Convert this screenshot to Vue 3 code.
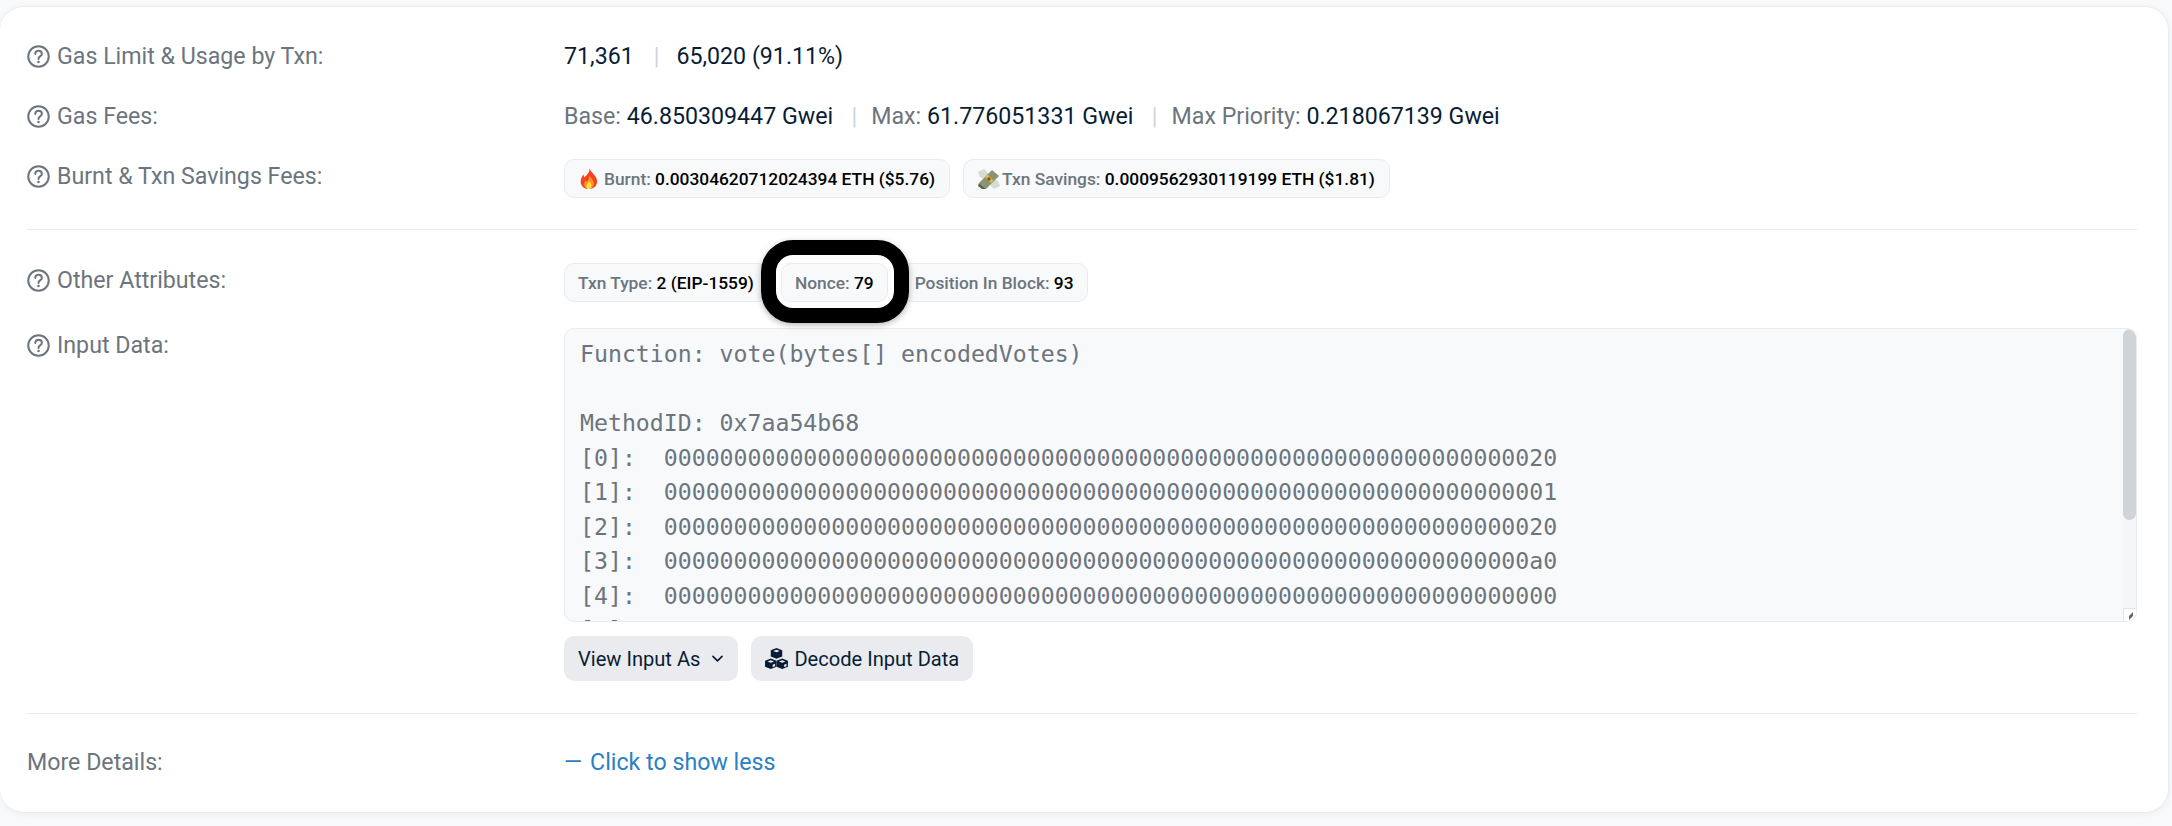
<script setup>
const labels = {
  gas: 'Gas Limit & Usage by Txn:',
  fees: 'Gas Fees:',
  burnt: 'Burnt & Txn Savings Fees:',
  other: 'Other Attributes:',
  input: 'Input Data:'
}
const zeros = (end) => end.padStart(64, '0')
const lines = [
  'Function: vote(bytes[] encodedVotes)',
  '',
  'MethodID: 0x7aa54b68',
  '[0]:  ' + zeros('20'),
  '[1]:  ' + zeros('1'),
  '[2]:  ' + zeros('20'),
  '[3]:  ' + zeros('a0'),
  '[4]:  ' + zeros('0'),
  '[5]:  ' + zeros('0')
]
</script>

<template>
  <div class="page">
    <div class="card">
      <section class="row r1">
        <div class="label"><svg class="help" viewBox="0 0 24 24"><circle cx="12" cy="12" r="10.7"/><path d="M8.6 9.3c.2-2 1.6-3.2 3.5-3.2 2 0 3.4 1.2 3.4 3 0 1.4-.8 2.1-1.9 2.8-1.1.7-1.6 1.3-1.6 2.6"/><circle class="dot" cx="12" cy="17.7" r="1.3"/></svg>{{ labels.gas }}</div>
        <div class="value">71,361<span class="sep first">|</span>65,020 (91.11%)</div>
      </section>
      <section class="row r2">
        <div class="label"><svg class="help" viewBox="0 0 24 24"><circle cx="12" cy="12" r="10.7"/><path d="M8.6 9.3c.2-2 1.6-3.2 3.5-3.2 2 0 3.4 1.2 3.4 3 0 1.4-.8 2.1-1.9 2.8-1.1.7-1.6 1.3-1.6 2.6"/><circle class="dot" cx="12" cy="17.7" r="1.3"/></svg>{{ labels.fees }}</div>
        <div class="value"><span class="muted">Base: </span>46.850309447 Gwei<span class="sep">|</span><span class="muted">Max: </span>61.776051331 Gwei<span class="sep">|</span><span class="muted">Max Priority: </span>0.218067139 Gwei</div>
      </section>
      <section class="row r3">
        <div class="label"><svg class="help" viewBox="0 0 24 24"><circle cx="12" cy="12" r="10.7"/><path d="M8.6 9.3c.2-2 1.6-3.2 3.5-3.2 2 0 3.4 1.2 3.4 3 0 1.4-.8 2.1-1.9 2.8-1.1.7-1.6 1.3-1.6 2.6"/><circle class="dot" cx="12" cy="17.7" r="1.3"/></svg>{{ labels.burnt }}</div>
        <div class="badges">
          <div class="badge fire-badge"><svg class="fire" viewBox="0 0 18 22"><path fill="#f4431f" d="M9.500 0c.6 3.500 4.500 5.800 6.800 9.800 2.700 4.900.6 12.200-7.300 12.200C2 22-.8 16.500.6 11.700c.6-2 1.700-3.200 2.300-5 .8.900 1.200 2 1.300 3.200C6.700 7.700 10 4.500 9.500 0z"/><path fill="#ff9a1f" d="M9.600 7.500c.5 2.500 4 4.200 4.400 8 .3 3.300-1.900 6.500-5 6.500s-5.200-2.500-5-5.500c.1-1.500.8-2.700 1.500-3.700.3.800.7 1.400 1.300 1.800C8 12.500 9.800 10.500 9.600 7.500z"/><path fill="#ffe14d" d="M9.200 14c.4 1.600 2.400 2.600 2.400 4.500 0 2-1.200 3.500-2.700 3.500s-2.600-1.400-2.600-3c0-2.300 2.500-2.800 2.900-5z"/></svg><span class="muted">Burnt: </span><span>0.00304620712024394 ETH ($5.76)</span></div>
          <div class="badge"><svg class="emoji" viewBox="0 0 22 20"><path fill="#d5dcd6" d="M0 3l6-3 5 5-5 5-4-2zM22 17l-6 3-5-5 5-5 4 2z"/><path fill="#8a9472" d="M1 14L14 1l7 6L8 20z"/><path fill="#58624a" d="M1 14l7 6H4l-4-3z"/><path fill="#e5b93c" d="M7 8l2.500-2.500 6 6L13 14z"/><circle cx="11" cy="10" r="1.800" fill="#6f6128"/></svg><span class="muted">Txn Savings: </span><span>0.0009562930119199 ETH ($1.81)</span></div>
        </div>
      </section>
      <hr class="rule rule-a" />
      <section class="row r4">
        <div class="label"><svg class="help" viewBox="0 0 24 24"><circle cx="12" cy="12" r="10.7"/><path d="M8.6 9.3c.2-2 1.6-3.2 3.5-3.2 2 0 3.4 1.2 3.4 3 0 1.4-.8 2.1-1.9 2.8-1.1.7-1.6 1.3-1.6 2.6"/><circle class="dot" cx="12" cy="17.7" r="1.3"/></svg>{{ labels.other }}</div>
        <div class="badges">
          <div class="badge"><span class="muted">Txn Type: </span>2 (EIP-1559)</div>
          <div class="nonce">
            <div class="ring"></div>
            <div class="badge nonce-badge"><span class="muted">Nonce: </span>79</div>
          </div>
          <div class="badge"><span class="muted">Position In Block: </span>93</div>
        </div>
      </section>
      <section class="row r5">
        <div class="label"><svg class="help" viewBox="0 0 24 24"><circle cx="12" cy="12" r="10.7"/><path d="M8.6 9.3c.2-2 1.6-3.2 3.5-3.2 2 0 3.4 1.2 3.4 3 0 1.4-.8 2.1-1.9 2.8-1.1.7-1.6 1.3-1.6 2.6"/><circle class="dot" cx="12" cy="17.7" r="1.3"/></svg>{{ labels.input }}</div>
        <div class="input-col">
          <div class="code">
            <pre class="code-text">{{ lines.join('\n') }}</pre>
            <div class="track"><div class="thumb"></div></div>
            <div class="resizer"><svg viewBox="0 0 12 12"><path d="M5 7l4-4v4l-4 4z" fill="#666"/></svg></div>
          </div>
          <div class="buttons">
            <button class="btn">View Input As<svg class="chev" viewBox="0 0 12 12"><path d="M1.800 4l4.200 4.200L10.200 4"/></svg></button>
            <button class="btn"><svg class="cubes" viewBox="0 0 24 22"><path d="M12 0l6 2.300v6.500l-6 2.400-6-2.400V2.300z"/><path d="M6 11l6 2.300v6.400l-6 2.300-6-2.300v-6.400z"/><path d="M18 11l6 2.300v6.400L18 22l-6-2.300v-6.400z"/><path class="top" d="M12 1.800l3.400 1.300L12 4.400 8.600 3.100zM6 12.800l3.400 1.300L6 15.400l-3.400-1.300zM18 12.800l3.400 1.300-3.400 1.300-3.400-1.300zM8 17.500l2.500-1v2.500L8 20zM20 17.500l2.500-1v2.500L20 20z"/></svg>Decode Input Data</button>
          </div>
        </div>
      </section>
      <hr class="rule rule-b" />
      <section class="row r6">
        <div class="label plain">More Details:</div>
        <div class="value link"><span class="dash">—</span>Click to show less</div>
      </section>
    </div>
  </div>
</template>

<style>
html, body { margin: 0; background: #f8f9fa; }
</style>

<style scoped>
.page {
  width: 2172px;
  height: 826px;
  overflow: hidden;
  background: #f8f9fa;
  padding-top: 6px;
  box-sizing: border-box;
  font-family: Roboto, "Liberation Sans", sans-serif;
  font-size: 23.200px;
  color: #081d35;
}
.card {
  width: 2169px;
  height: 807px;
  box-sizing: border-box;
  padding: 34px 31px 0 27px;
  background: #fff;
  border: 1px solid #e9ecef;
  border-left: 0;
  border-radius: 24px;
  box-shadow: 0 1px 6px rgba(189, 197, 209, 0.2);
}
.row { display: flex; }
.label {
  width: 537px;
  flex: none;
  display: flex;
  align-items: center;
  height: 30px;
  line-height: 30px;
  color: #6c757d;
}
.help {
  width: 23px;
  height: 23px;
  margin-right: 7px;
  fill: none;
  stroke: #6c757d;
  stroke-width: 2.100;
  stroke-linecap: round;
  flex: none;
}
.help .dot { fill: #6c757d; stroke: none; }
.value { line-height: 30px; white-space: pre; }
.muted { color: #6c757d; }
.sep { color: #ced4da; margin: 0 14px 0 18.500px; }
.sep.first { margin: 0 17px 0 20px; }
.r2 { margin-top: 30px; }
.r3 { margin-top: 30px; }
.rule { border: 0; height: 1px; background: #e9ecef; margin: 0; }
.rule-a { margin-top: 31px; }
.r4 { margin-top: 35px; }
.badges { display: flex; gap: 13px; margin-top: -2px; }
.badge {
  display: flex;
  align-items: center;
  height: 39px;
  box-sizing: border-box;
  padding: 0 14px;
  background: #f8f9fa;
  border: 1px solid #e9ecef;
  border-radius: 10px;
  font-size: 17.350px;
  font-weight: 500;
  white-space: pre;
  color: #000;
}
.badge .muted { color: #6c757d; }
.r4 .badge { padding: 0 13px; }
.fire-badge { padding-left: 15px; }
.fire { width: 18px; height: 21px; margin-right: 6px; flex: none; }
.emoji { width: 22px; height: 20px; margin-right: 2px; flex: none; }
.nonce { position: relative; z-index: 2; }
.ring {
  position: absolute;
  top: -23px;
  bottom: -21px;
  left: -20px;
  right: -21px;
  box-sizing: border-box;
  border: 15px solid #000;
  border-radius: 32px;
  background: #fff;
  box-shadow: 0 2px 6px rgba(0, 0, 0, 0.3);
}
.nonce-badge { position: relative; }
.r5 { margin-top: 26px; }
.r5 .label { margin-top: 2px; }
.input-col { flex: 1; min-width: 0; }
.code {
  position: relative;
  height: 294px;
  box-sizing: border-box;
  overflow: hidden;
  background: #f8f9fa;
  border: 1px solid #e9ecef;
  border-radius: 10px;
}
.code-text {
  margin: 0;
  padding: 8px 15px;
  font-family: "DejaVu Sans Mono", "Liberation Mono", monospace;
  font-size: 23.200px;
  line-height: 34.500px;
  color: #6c757d;
}
.track {
  position: absolute;
  top: 0;
  right: 0;
  width: 13px;
  height: 281px;
  background: #f5f6f8;
  border-radius: 7px;
}
.thumb { height: 191px; background: #cfd4d9; border-radius: 7px; }
.resizer {
  position: absolute;
  right: 0;
  bottom: 0;
  width: 12px;
  height: 12px;
  background: #fff;
  border: 1px solid #e2e5e9;
  border-width: 1px 0 0 1px;
}
.resizer svg { display: block; width: 12px; height: 12px; }
.buttons { display: flex; gap: 13px; margin-top: 14px; }
.btn {
  display: flex;
  align-items: center;
  height: 45px;
  padding: 0 14px;
  background: #e9ebef;
  border: 0;
  border-radius: 10px;
  font-family: inherit;
  font-size: 20.100px;
  color: #081d35;
}
.chev {
  width: 13px;
  height: 13px;
  margin-left: 11px;
  fill: none;
  stroke: #081d35;
  stroke-width: 1.500;
  stroke-linecap: round;
  stroke-linejoin: round;
}
.cubes { width: 23px; height: 21px; margin-right: 6px; fill: #081d35; }
.cubes .top { fill: #e9ebef; }
.rule-b { margin-top: 32px; }
.r6 { margin-top: 33px; }
.link { color: #2b80c5; }
.dash { margin-right: 8px; }
</style>
